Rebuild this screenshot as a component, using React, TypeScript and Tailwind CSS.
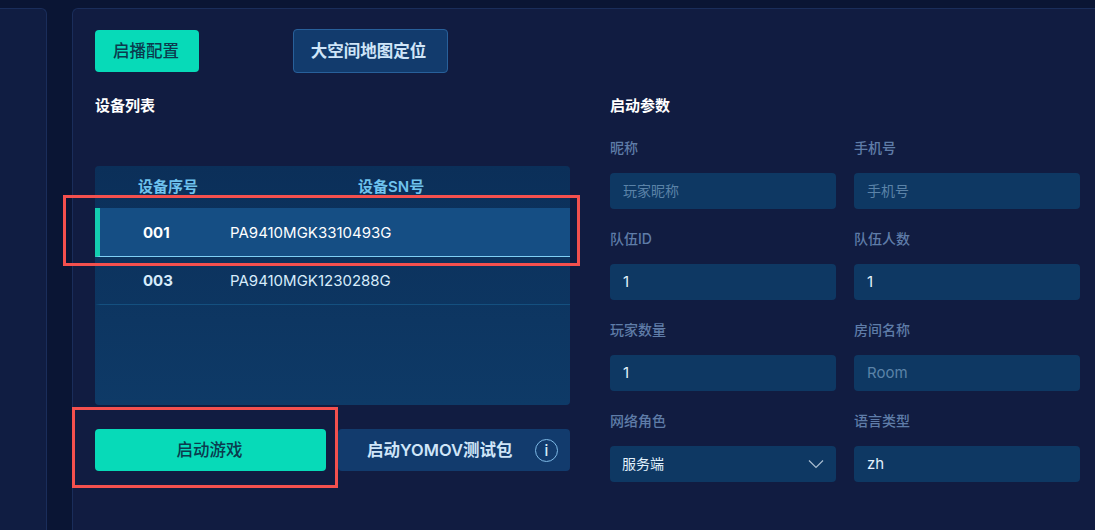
const FONT = "font-['Inter','Noto_Sans_CJK_SC',sans-serif]";

const devices = [
  { no: '001', sn: 'PA9410MGK3310493G', active: true },
  { no: '003', sn: 'PA9410MGK1230288G', active: false },
];

const fields = [
  { label: '昵称', placeholder: '玩家昵称' },
  { label: '手机号', placeholder: '手机号' },
  { label: '队伍ID', value: '1' },
  { label: '队伍人数', value: '1' },
  { label: '玩家数量', value: '1' },
  { label: '房间名称', placeholder: 'Room' },
  { label: '网络角色', value: '服务端', select: true },
  { label: '语言类型', value: 'zh' },
];

function Field({ label, value, placeholder, select }: { label: string; value?: string; placeholder?: string; select?: boolean }) {
  return (
    <div className="flex flex-col">
      <div className="h-[18px] text-[14px] leading-[18px] font-medium text-[#5f7ca8]">{label}</div>
      <div className="mt-[16px] flex h-[36px] items-center justify-between rounded-[4px] bg-[#0e3863] pb-[2px] pl-[13px] pr-[12px] text-[14px]">
        {value ? (
          <span className={select ? '-ml-[1px] text-[#e2f1fc]' : 'pt-[2px] text-[15px] text-[#e2f1fc]'}>{value}</span>
        ) : (
          <span className={placeholder === 'Room' ? 'pt-[2px] text-[15px] text-[#5b83a8]' : 'text-[#5b83a8]'}>{placeholder}</span>
        )}
        {select && (
          <svg width="16" height="10" viewBox="0 0 16 10" fill="none" className="mt-[2px] text-[#a9bdd0]">
            <path d="M1 1.5 L8 8.5 L15 1.5" stroke="currentColor" strokeWidth="1.2" />
          </svg>
        )}
      </div>
    </div>
  );
}

export default function App() {
  return (
    <div className={`relative flex h-[530px] w-[1095px] overflow-hidden bg-[#0a1534] pt-[8px] ${FONT}`}>
      <aside className="w-[47px] shrink-0 rounded-tr-[6px] border-t border-r border-[#1a2d5a] bg-[#101d42]" />

      <main className="ml-[25px] flex-1 rounded-tl-[6px] border-t border-l border-[#1a2d5a] bg-[#111c41] pl-[22px] pr-[15px] pt-[20px]">
        <div className="flex items-center">
          <button className="h-[42px] w-[104px] rounded-[4px] bg-[#07dab8] pr-[2px] text-[16.5px] font-medium text-[#0b3a4e]">
            启播配置
          </button>
          <button className="ml-[94px] h-[44px] w-[155px] rounded-[4px] border border-[#28609a] bg-[#123b6d] pr-[4px] text-[16.5px] font-semibold text-[#cfe5f8]">
            大空间地图定位
          </button>
        </div>

        <div className="mt-[21px] flex">
          <section className="w-[475px] shrink-0">
            <h2 className="h-[24px] text-[15px] leading-[24px] font-bold text-white">设备列表</h2>

            <div className="mt-[48px] h-[239px] rounded-[4px] bg-gradient-to-b from-[#0b2f59] to-[#0e3a67]">
              <div className="flex h-[42px] items-center text-[15px] font-semibold text-[#6fc3ee]">
                <span className="ml-[43px]">设备序号</span>
                <span className="ml-[160px]">设备SN号</span>
              </div>
              {devices.map((d) => (
                <div
                  key={d.no}
                  className={
                    d.active
                      ? 'flex h-[49px] items-center border-b border-[#7fd0f5] border-l-[5px] border-l-[#13cdb0] bg-[#154e84] pt-[2px] text-white'
                      : 'flex h-[48px] items-center border-b border-[#14507f] border-l-[5px] border-l-transparent pt-[2px] text-[#d7ecfb]'
                  }
                >
                  <span className="ml-[43px] w-[87px] text-[15px] font-bold">{d.no}</span>
                  <span className="text-[15px]">{d.sn}</span>
                </div>
              ))}
            </div>

            <div className="mt-[24px] flex gap-[12px]">
              <button className="h-[42px] w-[231px] rounded-[4px] bg-[#07dab8] pr-[2px] text-[16.5px] font-medium text-[#0b3a4e]">
                启动游戏
              </button>
              <button className="flex h-[42px] w-[232px] items-center rounded-[4px] bg-[#123b6d] pl-[29px] pr-[12px] text-[16.5px] font-semibold text-[#cfe5f8]">
                <span>启动YOMOV测试包</span>
                <span className="ml-auto flex h-[23px] w-[23px] items-center justify-center rounded-full border border-[#7db9e6] text-[15px] font-medium leading-none text-[#d7ecfb]">
                  i
                </span>
              </button>
            </div>
          </section>

          <section className="ml-[40px] w-[470px] shrink-0">
            <h2 className="h-[24px] text-[15px] leading-[24px] font-bold text-white">启动参数</h2>
            <div className="mt-[21px] grid grid-cols-[226px_226px] gap-x-[18px] gap-y-[21px]">
              {fields.map((f) => (
                <Field key={f.label} {...f} />
              ))}
            </div>
          </section>
        </div>
      </main>

      {/* red annotation boxes drawn over the screenshot */}
      <div className="absolute left-[63px] top-[195px] h-[71px] w-[517px] border-[3px] border-[#f4504e]" />
      <div className="absolute left-[72px] top-[407px] h-[81px] w-[266px] border-[3px] border-[#f4504e]" />
    </div>
  );
}
